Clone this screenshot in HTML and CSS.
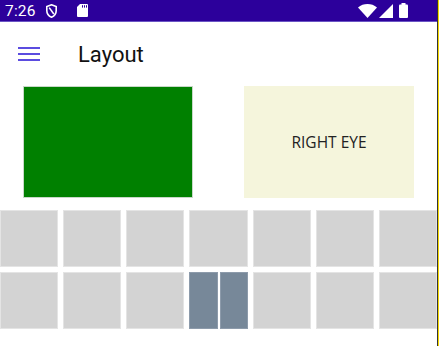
FILE: index.html
```html
<!DOCTYPE html>
<html lang="en">
<head>
  <meta charset="UTF-8" />
  <meta name="viewport" content="width=device-width, initial-scale=1.0" />
  <title>Layout</title>
  <link rel="stylesheet" href="styles.css">
</head>
<body>
  <div class="screen">
    <div class="status-bar">
      <span class="time">7:26</span>
      <svg class="status-icon shield" width="11" height="14" viewBox="0 0 11 14">
        <path d="M5.5 0.8 L10.2 2.6 V6.4 C10.2 9.6 8.2 12 5.5 13.2 C2.8 12 0.8 9.6 0.8 6.4 V2.6 Z" fill="none" stroke="#fff" stroke-width="1.6"/>
        <path d="M3.2 3.6 L7.8 10" stroke="#fff" stroke-width="1.6"/>
      </svg>
      <svg class="status-icon sd" width="11" height="13" viewBox="0 0 11 13">
        <path d="M3 0 H10 Q11 0 11 1 V12 Q11 13 10 13 H1 Q0 13 0 12 V3 Z" fill="#fff"/>
        <rect x="5" y="1.2" width="1" height="2.4" fill="#2c009b"/>
        <rect x="7" y="1.2" width="1" height="2.4" fill="#2c009b"/>
        <rect x="9" y="1.2" width="1" height="2.4" fill="#2c009b"/>
      </svg>
      <span class="spacer"></span>
      <svg class="status-icon" width="19" height="14" viewBox="0 0 19 14">
        <path d="M0 3.4 C5.4 -1.1 13.6 -1.1 19 3.4 L9.5 14 Z" fill="#fff"/>
      </svg>
      <svg class="status-icon signal" width="14" height="14" viewBox="0 0 14 14">
        <path d="M14 0 V14 H0 Z" fill="#fff"/>
      </svg>
      <svg class="status-icon battery" width="9" height="15" viewBox="0 0 9 15">
        <rect x="2.5" y="0" width="4" height="2" fill="#fff"/>
        <rect x="0" y="1.5" width="9" height="13.5" rx="1" fill="#fff"/>
      </svg>
    </div>

    <div class="toolbar">
      <svg class="menu" width="22" height="14" viewBox="0 0 22 14">
        <rect x="0" y="0" width="22" height="2" fill="#5b4ce0"/>
        <rect x="0" y="6" width="22" height="2" fill="#5b4ce0"/>
        <rect x="0" y="12" width="22" height="2" fill="#5b4ce0"/>
      </svg>
      <h1 class="title">Layout</h1>
    </div>

    <div class="eyes">
      <div class="eye left-eye"></div>
      <div class="eye right-eye">RIGHT EYE</div>
    </div>

    <div class="grid">
      <div class="cell"></div>
      <div class="cell"></div>
      <div class="cell"></div>
      <div class="cell"></div>
      <div class="cell"></div>
      <div class="cell"></div>
      <div class="cell"></div>
      <div class="cell"></div>
      <div class="cell"></div>
      <div class="cell"></div>
      <div class="cell split">
        <div class="half"></div>
        <div class="half"></div>
      </div>
      <div class="cell"></div>
      <div class="cell"></div>
      <div class="cell"></div>
    </div>
  </div>
</body>
</html>
```

FILE: styles.css
```css
body {
  margin: 0;
  background: #f7d800;
  font-family: Roboto, 'Noto Sans', sans-serif;
}
.screen {
  width: 437px;
  height: 346px;
  background: #ffffff;
  border-right: 1px solid #333;
  overflow: hidden;
}
.status-bar {
  height: 22px;
  background: #2c009b;
  border-bottom: 1px solid #6a55c4;
  box-sizing: border-box;
  display: flex;
  align-items: center;
  padding: 0 29px 0 5px;
  color: #fff;
}
.time {
  font-size: 15.5px;
  margin-right: 10px;
  letter-spacing: 0.2px;
}
.status-icon {
  display: block;
}
.sd {
  margin-left: 20px;
}
.spacer {
  flex: 1;
}
.signal {
  margin-left: 2px;
}
.battery {
  margin-left: 6px;
}
.toolbar {
  height: 64px;
  display: flex;
  align-items: center;
  padding-left: 18px;
  box-sizing: border-box;
}
.menu {
  display: block;
  margin-top: -1px;
}
.title {
  margin: 0 0 0 38px;
  font-size: 22px;
  font-weight: 400;
  color: #111;
}
.eyes {
  display: flex;
  justify-content: space-between;
  padding: 0 23px;
}
.eye {
  width: 170px;
  height: 112px;
  box-sizing: border-box;
}
.left-eye {
  background: #008000;
  border: 1px solid #c8d8c8;
}
.right-eye {
  background: #f5f5dc;
  display: flex;
  align-items: center;
  justify-content: center;
  font-family: 'Open Sans', sans-serif;
  font-size: 15.5px;
  color: #222;
}
.grid {
  margin-top: 12px;
  display: grid;
  grid-template-columns: repeat(7, 1fr);
  grid-auto-rows: 57px;
  gap: 5px;
}
.cell {
  background: #d3d3d3;
  border: 1px solid #e4e4e4;
}
.cell.split {
  background: none;
  border: none;
  display: flex;
  gap: 2px;
}
.half {
  flex: 1;
  background: #778899;
  border: 1px solid #8d9bab;
}
```
